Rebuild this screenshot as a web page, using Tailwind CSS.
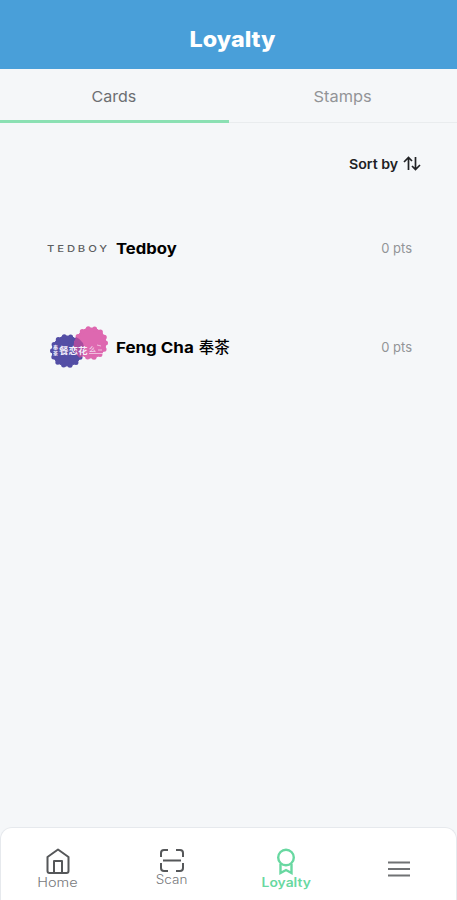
<!DOCTYPE html>
<html lang="en">
<head>
<meta charset="utf-8">
<meta name="viewport" content="width=device-width, initial-scale=1">
<title>Loyalty</title>
<script src="https://cdn.jsdelivr.net/npm/@tailwindcss/browser@4"></script>
</head>
<body class="bg-[#f5f7f9] font-['Inter','Noto_Sans_CJK_SC',sans-serif]">
<div class="flex h-[900px] w-full flex-col overflow-hidden">
  <header class="flex h-[69px] shrink-0 items-center justify-center bg-[#499fd9] pt-[9px] pl-[9px]">
    <h1 class="scale-x-[1.06] text-[22px] leading-7 font-extrabold text-white">Loyalty</h1>
  </header>
  <nav class="grid h-[54px] shrink-0 grid-cols-2 text-center text-[15px]">
    <a class="border-b-[3px] border-[#8be0b3] pt-[16px] leading-6 text-[#6c6e72]"><span class="inline-block scale-x-[1.07]">Cards</span></a>
    <a class="border-b border-[#e9ecee] pt-[16px] leading-6 text-[#929497]"><span class="inline-block scale-x-[1.09]">Stamps</span></a>
  </nav>
  <main class="flex-1">
    <div class="flex items-center justify-end gap-[5px] pt-[30px] pr-[36px]">
      <span class="origin-right scale-x-[1.09] text-[13px] leading-[22px] font-semibold text-[#202124]">Sort by</span>
      <svg class="h-[16px] w-[18px]" viewBox="0 0 18 16" fill="none" stroke="#202124" stroke-width="1.7"><path d="M5.500 14V1.500M1 6l4.500-4.500L9 5M12.500 1v12.500M9 10l3.500 3.500L17 9"/></svg>
    </div>
    <div class="mt-[49px] flex h-[50px] items-center pr-[45px] pl-[47px]">
      <div class="w-[69px] text-[9px] font-medium whitespace-nowrap text-[#5c5e60]"><span class="inline-block origin-left scale-x-[1.25] tracking-[2.3px]">TEDBOY</span></div>
      <div class="flex-1 text-[15px] font-bold text-black"><span class="inline-block origin-left scale-x-[1.11]">Tedboy</span></div>
      <div class="text-[13px] text-[#929497]">0 pts</div>
    </div>
    <div class="mt-[49px] flex h-[50px] items-center pr-[45px] pl-[47px]">
      <svg class="mr-[7px] h-[46px] w-[62px]" viewBox="0 0 62 46">
        <g fill="#534ea5" stroke="#534ea5"><circle cx="20" cy="26" r="15"/><circle cx="20" cy="26" r="14.5" fill="none" stroke-width="5" stroke-linecap="round" stroke-dasharray="0 6.507"/></g>
        <g fill="#de68b0" stroke="#de68b0"><circle cx="44" cy="18" r="15"/><circle cx="44" cy="18" r="14.500" fill="none" stroke-width="5" stroke-linecap="round" stroke-dasharray="0 6.507"/></g>
        <path d="M29 12Q38 16 37 26Q36 31 33 33Q25 27 27 17Z" fill="#a84c9f"/>
        <g fill="#f5effb" font-family="Noto Sans CJK SC, sans-serif" font-weight="700"><text x="6" y="24" font-size="5">奉</text><text x="6" y="30" font-size="5">茶</text><text x="12" y="29" font-size="9.500">餐恋花</text><text x="42" y="27" font-size="7" font-weight="400">么</text></g>
        <path d="M42 28.500h14M50 20l4 1M51 25h4" stroke="#f5d2e8" stroke-width=".8"/>
      </svg>
      <div class="flex flex-1 items-center text-[15px] font-bold text-black"><span class="mr-[14px] origin-left scale-x-[1.13]">Feng Cha</span><span class="text-[15.500px] font-medium">奉茶</span></div>
      <div class="text-[13px] text-[#929497]">0 pts</div>
    </div>
  </main>
  <footer class="grid h-[73px] shrink-0 grid-cols-4 rounded-t-[12px] border border-b-0 border-[#e6e9ed] bg-white text-[12.5px] leading-4 font-light text-[#77797c]">
    <a class="flex flex-col items-center pt-[20px]">
      <svg class="h-[27px] w-[24px]" viewBox="0 0 24 27" fill="none" stroke="#555759" stroke-width="2" stroke-linejoin="round"><path d="M1.500 9L12 1.500 22.500 9v14q0 2-2 2h-17q-2 0-2-2z"/><path d="M8 25V13h8v12"/></svg>
      <span class="scale-x-[1.16]">Home</span>
    </a>
    <a class="flex flex-col items-center pt-[21px]">
      <svg class="h-[23px] w-[24px]" viewBox="0 0 24 23" fill="none" stroke="#555759" stroke-width="2"><path d="M1 8V4q0-3 3-3h4M16 1h4q3 0 3 3v4M1 14v5q0 3 3 3h4M16 22h4q3 0 3-3v-5M3 11.500h18"/></svg>
      <span class="scale-x-[1.08]">Scan</span>
    </a>
    <a class="flex flex-col items-center pt-[20px] pl-[1px] text-[#68d8a1]">
      <svg class="h-[27px] w-[20px]" viewBox="0 0 20 27" fill="none" stroke="currentColor" stroke-width="2.400"><circle cx="10" cy="9.500" r="7.800"/><path d="M4.500 16v9l5.500-3 5.500 3v-9"/></svg>
      <span class="scale-x-[1.11] font-semibold">Loyalty</span>
    </a>
    <a class="flex justify-center pt-[33px]">
      <svg class="h-[16px] w-[22px]" viewBox="0 0 22 16" stroke="#707274" stroke-width="2"><path d="M0 1.500h22M0 8h22M0 14.500h22"/></svg>
    </a>
  </footer>
</div>
</body>
</html>
